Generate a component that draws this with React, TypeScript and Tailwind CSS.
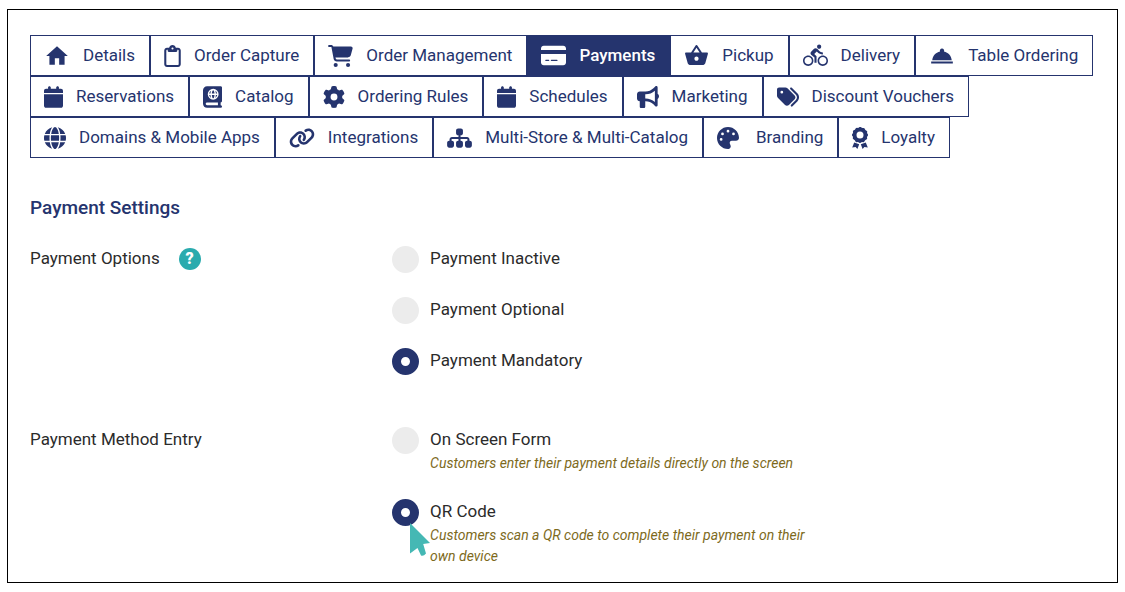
import type { ReactNode } from "react";
import {
  FaBookAtlas,
  FaBullhorn,
  FaCalendar,
  FaCartShopping,
  FaCreditCard,
  FaGear,
  FaGlobe,
  FaLink,
  FaPalette,
  FaRegClipboard,
  FaSitemap,
  FaTags,
} from "react-icons/fa6";
import {
  MdDirectionsBike,
  MdHome,
  MdRoomService,
  MdShoppingBasket,
} from "react-icons/md";

type Tab = { label: string; icon: ReactNode; active?: boolean };

function Rosette() {
  return (
    <svg viewBox="0 0 16 22" className="h-[22px] w-4" fill="currentColor">
      <circle cx="8" cy="8" r="5.500" fill="none" stroke="currentColor" strokeWidth="4" />
      <circle
        cx="8"
        cy="8"
        r="6.600"
        fill="none"
        stroke="currentColor"
        strokeWidth="2.800"
        strokeLinecap="round"
        strokeDasharray="0.010 3.446"
      />
      <path d="M2.200 15.600 7.200 17.200 5.400 22 3.600 20 0.200 20.400Z" />
      <path d="M13.800 15.600 8.800 17.200 10.600 22 12.400 20 15.800 20.400Z" />
    </svg>
  );
}

const tabRows: Tab[][] = [
  [
    { label: "Details", icon: <MdHome className="h-[26px] w-[26px]" /> },
    { label: "Order Capture", icon: <FaRegClipboard className="h-[22px] w-[17px]" /> },
    { label: "Order Management", icon: <FaCartShopping className="h-[22px] w-[25px]" /> },
    { label: "Payments", icon: <FaCreditCard className="size-[25px]" />, active: true },
    { label: "Pickup", icon: <MdShoppingBasket className="size-[25px]" /> },
    { label: "Delivery", icon: <MdDirectionsBike className="size-[25px]" /> },
    { label: "Table Ordering", icon: <MdRoomService className="size-[26px]" /> },
  ],
  [
    { label: "Reservations", icon: <FaCalendar className="h-[22px] w-[19px]" /> },
    { label: "Catalog", icon: <FaBookAtlas className="h-[22px] w-[19px]" /> },
    { label: "Ordering Rules", icon: <FaGear className="size-[22px]" /> },
    { label: "Schedules", icon: <FaCalendar className="h-[22px] w-[19px]" /> },
    { label: "Marketing", icon: <FaBullhorn className="size-[22px]" /> },
    { label: "Discount Vouchers", icon: <FaTags className="size-[22px]" /> },
  ],
  [
    { label: "Domains & Mobile Apps", icon: <FaGlobe className="size-[22px]" /> },
    { label: "Integrations", icon: <FaLink className="h-[22px] w-[26px]" /> },
    { label: "Multi-Store & Multi-Catalog", icon: <FaSitemap className="h-[22px] w-[25px]" /> },
    { label: "Branding", icon: <FaPalette className="mr-1 size-[22px]" /> },
    { label: "Loyalty", icon: <Rosette /> },
  ],
];

function TabButton({ label, icon, active }: Tab) {
  return (
    <button
      type="button"
      className={`flex h-[41px] items-center gap-[13px] border border-[#25346e] pr-[14px] pl-[13px] whitespace-nowrap ${
        active ? "bg-[#25346e] font-medium text-white" : "bg-white text-[#25346e]"
      }`}
    >
      <span className="shrink-0">{icon}</span>
      <span>{label}</span>
    </button>
  );
}

function RadioOption({
  name,
  label,
  hint,
  defaultChecked,
  children,
}: {
  name: string;
  label: string;
  hint?: string;
  defaultChecked?: boolean;
  children?: ReactNode;
}) {
  return (
    <label className="relative flex items-start gap-[11px]">
      <input
        type="radio"
        name={name}
        defaultChecked={defaultChecked}
        className="size-[27px] shrink-0 appearance-none rounded-full bg-[#ececec] checked:border-[9px] checked:border-[#25346e] checked:bg-white"
      />
      <span>
        <span className="block leading-6">{label}</span>
        {hint && (
          <span className="mt-0.5 block text-sm leading-[21px] text-[#7d6a1c] italic">{hint}</span>
        )}
      </span>
      {children}
    </label>
  );
}

function Pointer() {
  return (
    <svg
      viewBox="0 0 20 34"
      className="pointer-events-none absolute top-6 left-[18px] h-[34px] w-5"
      fill="#45b8b4"
    >
      <path d="M0 0 20 20 13.200 21 16 30.500Q13.500 33.500 11 32.500L7.500 25 0 30.500Z" />
    </svg>
  );
}

export default function App() {
  return (
    <main className="mx-[7px] mt-[9px] mb-2 border border-black bg-white px-[22px] pt-[25px] pb-[15px] font-[Roboto,sans-serif] text-[17px] text-[#2b2b2b]">
      <nav>
        {tabRows.map((row, i) => (
          <div key={i} className="flex">
            {row.map((tab) => (
              <TabButton key={tab.label} {...tab} />
            ))}
          </div>
        ))}
      </nav>

      <h1 className="mt-9 text-[19px] leading-7 font-medium text-[#25346e]">Payment Settings</h1>

      <div role="radiogroup" aria-labelledby="payment-options" className="mt-6 flex">
        <div className="flex w-[34%] items-start gap-[19px]">
          <span id="payment-options" className="leading-6">
            Payment Options
          </span>
          <button
            type="button"
            aria-label="Help"
            className="mt-0.5 flex size-[22px] items-center justify-center rounded-full bg-[#2aabae] text-base font-black text-white"
          >
            ?
          </button>
        </div>
        <div className="flex flex-col gap-6">
          <RadioOption name="payment" label="Payment Inactive" />
          <RadioOption name="payment" label="Payment Optional" />
          <RadioOption name="payment" label="Payment Mandatory" defaultChecked />
        </div>
      </div>

      <div role="radiogroup" aria-labelledby="payment-entry" className="mt-[52px] flex">
        <span id="payment-entry" className="w-[34%] leading-6">
          Payment Method Entry
        </span>
        <div className="flex w-[420px] flex-col gap-[25px]">
          <RadioOption
            name="entry"
            label="On Screen Form"
            hint="Customers enter their payment details directly on the screen"
          />
          <RadioOption
            name="entry"
            label="QR Code"
            hint="Customers scan a QR code to complete their payment on their own device"
            defaultChecked
          >
            <Pointer />
          </RadioOption>
        </div>
      </div>
    </main>
  );
}
